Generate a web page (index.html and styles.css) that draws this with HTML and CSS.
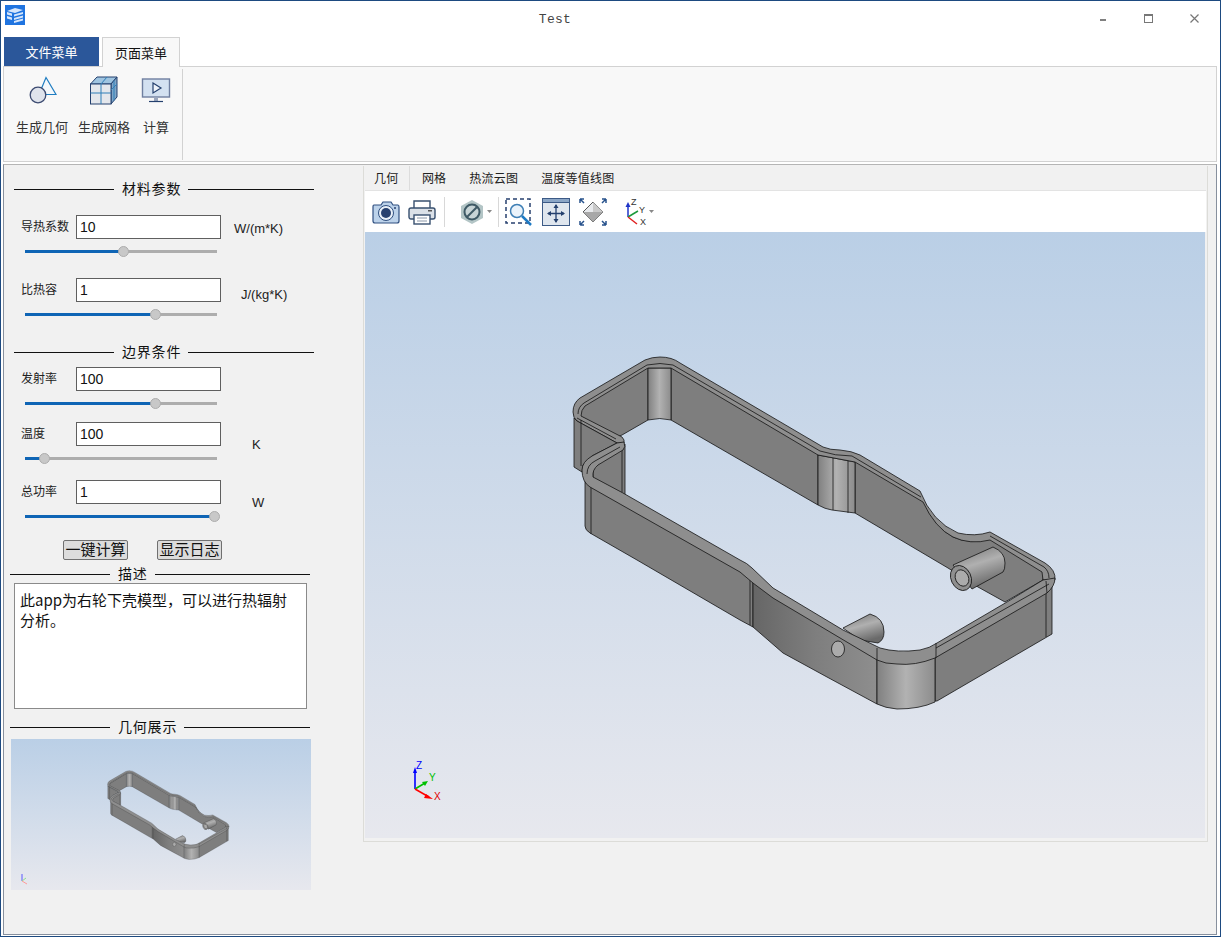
FILE: index.html
```html
<!DOCTYPE html>
<html lang="zh-CN">
<head>
    <meta charset="UTF-8">
    <meta name="viewport" content="width=device-width, initial-scale=1.0">
    <title>Test</title>
    <link rel="stylesheet" href="styles.css">
</head>
<body>
    <!-- shared geometry, used by the big viewer and the thumbnail -->
    <svg class="defs" width="0" height="0">
        <defs>
            <linearGradient id="bgGrad" x1="0" y1="0" x2="0" y2="1">
                <stop offset="0" stop-color="#bacfe6"/>
                <stop offset="1" stop-color="#e7e8ee"/>
            </linearGradient>
            <linearGradient id="colGrad" x1="0" y1="0" x2="1" y2="0">
                <stop offset="0" stop-color="#808080"/>
                <stop offset="0.5" stop-color="#b2b2b2"/>
                <stop offset="1" stop-color="#8c8c8c"/>
            </linearGradient>
            <linearGradient id="wallGrad" x1="0" y1="0" x2="1" y2="0">
                <stop offset="0" stop-color="#666666"/>
                <stop offset="0.5" stop-color="#7e7e7e"/>
                <stop offset="1" stop-color="#8e8e8e"/>
            </linearGradient>
            <linearGradient id="bossGrad" x1="0" y1="0" x2="0.4" y2="1">
                <stop offset="0" stop-color="#6f6f6f"/>
                <stop offset="0.5" stop-color="#b0b0b0"/>
                <stop offset="1" stop-color="#6a6a6a"/>
            </linearGradient>
            <g id="model" class="model">
                <!-- back inner walls -->
                <path class="wall" d="M580,408 L648,366 L648,420 L622,435 L617,437 L580,416 Z"/>
                <path class="wall" d="M671,366 L818,453 L818,505 L671,420 Z"/>
                <path class="col" d="M648,368 L671,368 L671,420 Q660,417 648,420 Z"/>
                <path class="wall" d="M855,460 L923,500 Q935,528 953,537 Q970,545 990,538 L1044,570 L1043,580 L1005,602 L978,587 L948,568 L855,513 Z"/>
                <path class="col" d="M818,455 L855,462 L855,513 L832,510 Q825,509 818,505 Z"/>
                <path class="line" d="M833,458 L833,510 M848,460 L848,513"/>
                <!-- back rim -->
                <path class="rim" d="M573,412 Q573,403 580,398 L645,360 Q652,357 660,357 Q672,357 680,363 L823,447 Q830,450 840,450 Q852,451 860,455 L920,491 Q932,522 958,533 Q975,537 990,532 L1045,563 Q1056,570 1055,580 L1043,580 L1042,572 L990,540 Q970,545 953,537 Q935,528 923,502 L855,462 L818,455 L671,368 L648,368 L585,406 Q581,410 581,416 L622,437 Q625,440 624,443 L617,443 L577,421 Q573,418 573,412 Z"/>
                <path class="line" d="M578,414 Q578,407 584,403 L647,365 Q660,362 673,365 L820,451 Q835,456 852,456 L921,497 M990,536 L1044,567 Q1049,571 1049,578 M577,418 L616,439"/>
                <!-- left outer walls -->
                <path class="wall" d="M574,418 L574,467 L582,472 L583,465 L592,456 L617,443 L577,421 Z"/>
                <path class="line" d="M581,420 L581,466"/>
                <path class="wall" d="M593,468 L622,446 L625,444 L625,495 L593,478 Z"/>
                <path class="line" d="M622,447 L622,492"/>
                <!-- bosses -->
                <path class="boss" d="M843,628 L870,614 Q884,618 884,632 Q884,640 878,643 L860,640 Z"/>
                <path class="boss" d="M953,565 L993,547 Q1005,552 1005,563 Q1005,570 1003,572 L972,589 Z"/>
                <ellipse class="boss-end" cx="961" cy="578" rx="10" ry="13" transform="rotate(-25 961 578)"/>
                <ellipse class="boss-hole" cx="962" cy="578" rx="6.5" ry="8.5" transform="rotate(-25 962 578)"/>
                <!-- front wall -->
                <path class="wall" d="M585,478 L740,566 L753,578 L753,627 L740,620 L637,560 L590,533 Q585,530 585,526 Z"/>
                <path class="wall-shade" d="M753,578 L877,655 L877,704 L827,677 L783,653 L753,627 Z"/>
                <path class="wall" d="M935,652 L1052,584 L1052,634 L937,701 L935,701 Z"/>
                <path class="col" d="M877,655 L935,652 L935,702 Q920,709 897,709 Q885,708 877,704 Z"/>
                <path class="line" d="M591,484 L591,534 M750,575 L750,625 M1046,590 L1046,637"/>
                <ellipse class="boss-hole" cx="838" cy="649" rx="6.5" ry="8"/>
                <!-- front rim -->
                <path class="rim" d="M582,470 Q582,462 592,456 L617,443 L624,442 Q626,447 623,450 L598,465 Q592,470 593,477 L623,493 L740,560 Q747,563 752,568 L773,588 L843,630 L880,648 Q897,653 920,650 Q930,648 937,643 L1007,602 L1043,580 L1055,578 Q1055,586 1047,593 L935,658 Q915,666 897,664 Q885,664 877,660 L773,598 L753,583 L740,572 L590,487 Q582,482 582,470 Z"/>
                <path class="line" d="M587,474 Q587,465 595,461 L620,447 M936,648 L1049,584 M877,648 L877,660 M936,643 L936,658 M1046,581 L1047,593"/>
            </g>
        </defs>
    </svg>

    <div class="window">
        <div class="titlebar">
            <svg class="app-icon" width="20" height="20" viewBox="0 0 20 20">
                <rect width="20" height="20" fill="#1f74e0"/>
                <path d="M2,6 L10,3 L18,5 L10,8 Z M2,7 L7,8.5 L7,11 L2,9.5 Z M9,9.5 L18,7 L18,9 L9,11.5 Z M2,11 L7,12.5 L7,15 L2,13.5 Z M9,13 L18,10.5 L18,12.5 L9,15 Z M9,16 L18,13.5 L18,15.5 L9,18 Z" fill="#d6e6fb"/>
            </svg>
            <div class="title-text">Test</div>
            <div class="win-controls">
                <svg width="9" height="9" viewBox="0 0 9 9"><rect x="2" y="5" width="6" height="2" fill="#808080"/></svg>
                <svg width="9" height="9" viewBox="0 0 9 9"><rect x="0.5" y="0.5" width="8" height="8" fill="none" stroke="#777"/><rect x="0" y="0" width="9" height="2" fill="#777"/></svg>
                <svg width="9" height="9" viewBox="0 0 9 9"><path d="M0.5,0.5 L8.5,8.5 M8.5,0.5 L0.5,8.5" stroke="#777" stroke-width="1.2"/></svg>
            </div>
        </div>

        <div class="tabbar">
            <div class="tab-file">文件菜单</div>
            <div class="tab-page">页面菜单</div>
        </div>

        <div class="ribbon">
            <div class="ribbon-group">
                <div class="ribbon-item">
                    <svg width="30" height="30" viewBox="0 0 30 30">
                        <path d="M19,1.5 L29,18.5 L12,18.5 Z" fill="#f4f8fb" stroke="#1f7dc1" stroke-width="1.2"/>
                        <circle cx="11" cy="19" r="7.8" fill="#dfe3ec" stroke="#3c4a70" stroke-width="1.3"/>
                    </svg>
                    <span>生成几何</span>
                </div>
                <div class="ribbon-item">
                    <svg width="30" height="30" viewBox="0 0 30 30">
                        <path d="M1.5,8 L8,1 L28,1 L22,8 Z" fill="#9fc4e0" stroke="#24406e"/>
                        <path d="M22,8 L28,1 L28,21 L22,28 Z" fill="#7fa6c8" stroke="#24406e"/>
                        <rect x="1.5" y="8" width="20.5" height="20" fill="#e4e7ec" stroke="#24406e"/>
                        <path d="M12,8 L12,28 M1.5,17 L22,17 M12,8 L18,1 M25,4.5 L25,24.5 M22,14 L28,8" stroke="#2f7fb8" fill="none"/>
                    </svg>
                    <span>生成网格</span>
                </div>
                <div class="ribbon-item">
                    <svg width="30" height="30" viewBox="0 0 30 30">
                        <rect x="1.5" y="3" width="27" height="18" fill="#d3e1f1" stroke="#6f7fa0" stroke-width="1.4"/>
                        <path d="M12,7 L20,12 L12,17 Z" fill="#eef3fa" stroke="#24406e" stroke-width="1.2"/>
                        <path d="M13,21 L17,21 L17,25 L13,25 Z" fill="#9aa6bd"/>
                        <path d="M8,25.5 L22,25.5" stroke="#24406e" stroke-width="1.2"/>
                    </svg>
                    <span>计算</span>
                </div>
            </div>
        </div>

        <div class="main">
            <div class="side">
                <div class="section-title first"><i></i><span>材料参数</span><i></i></div>

                <div class="field first">
                    <div class="field-row">
                        <label>导热系数</label>
                        <input type="text" value="10">
                        <span class="unit unit-a">W/(m*K)</span>
                    </div>
                    <div class="slider"><div class="fill" style="width:98px"></div><div class="thumb" style="left:98px"></div></div>
                </div>
                <div class="field">
                    <div class="field-row">
                        <label>比热容</label>
                        <input type="text" value="1">
                        <span class="unit unit-b">J/(kg*K)</span>
                    </div>
                    <div class="slider"><div class="fill" style="width:130px"></div><div class="thumb" style="left:130px"></div></div>
                </div>

                <div class="section-title second"><i></i><span>边界条件</span><i></i></div>

                <div class="field tight">
                    <div class="field-row">
                        <label>发射率</label>
                        <input type="text" value="100">
                    </div>
                    <div class="slider"><div class="fill" style="width:130px"></div><div class="thumb" style="left:130px"></div></div>
                </div>
                <div class="field mid">
                    <div class="field-row">
                        <label>温度</label>
                        <input type="text" value="100">
                        <span class="unit unit-c">K</span>
                    </div>
                    <div class="slider"><div class="fill" style="width:19px"></div><div class="thumb" style="left:19px"></div></div>
                </div>
                <div class="field last">
                    <div class="field-row">
                        <label>总功率</label>
                        <input type="text" value="1">
                        <span class="unit unit-c">W</span>
                    </div>
                    <div class="slider"><div class="fill" style="width:189px"></div><div class="thumb" style="left:189px"></div></div>
                </div>

                <div class="actions">
                    <button>一键计算</button>
                    <button>显示日志</button>
                </div>

                <div class="section-title wide desc-title"><i></i><span>描述</span><i></i></div>
                <div class="desc-box">此app为右轮下壳模型，可以进行热辐射分析。</div>

                <div class="section-title wide thumb-title"><i></i><span>几何展示</span><i></i></div>
                <svg class="thumb-view" width="300" height="151" viewBox="0 0 300 151">
                    <rect width="300" height="151" fill="url(#bgGrad)"/>
                    <svg width="300" height="151" viewBox="190 231 1190 599"><use href="#model"/></svg>
                    <path d="M11,142 L11,135" stroke="#5a5aff" fill="none"/>
                    <path d="M11,142 L15,139" stroke="#8ce08c" fill="none"/>
                    <path d="M11,142 L16,145" stroke="#ff9a9a" fill="none"/>
                </svg>
            </div>

            <div class="viewer-panel">
                <div class="viewer-tabs">
                    <div class="vtab active">几何</div>
                    <div class="vtab">网格</div>
                    <div class="vtab">热流云图</div>
                    <div class="vtab">温度等值线图</div>
                </div>
                <div class="toolbar">
                    <svg class="tool t-camera" width="28" height="26" viewBox="0 0 28 26">
                        <path d="M2,6 L9,6 L11,3 L19,3 L21,6 L26,6 Q27,6 27,8 L27,22 Q27,24 25,24 L3,24 Q1,24 1,22 L1,8 Q1,6 2,6 Z" fill="#bcd2ea" stroke="#2f4f80" stroke-width="1.2"/>
                        <circle cx="14" cy="14" r="7.5" fill="#eaf1f9" stroke="#2f4f80"/>
                        <circle cx="14" cy="14" r="5" fill="#27406f"/>
                        <circle cx="23" cy="9" r="1" fill="#27406f"/>
                    </svg>
                    <svg class="tool t-print" width="28" height="26" viewBox="0 0 28 26">
                        <path d="M6,9 L6,2 L22,2 L22,9" fill="#fff" stroke="#38506f" stroke-width="1.4"/>
                        <rect x="1" y="9" width="26" height="11" rx="2" fill="#dbe1e8" stroke="#38506f" stroke-width="1.4"/>
                        <rect x="6" y="16" width="16" height="9" fill="#fff" stroke="#38506f" stroke-width="1.4"/>
                        <path d="M9,19 L19,19 M9,22 L19,22" stroke="#8a97a8"/>
                        <rect x="20" y="11" width="4" height="1.5" fill="#555"/>
                    </svg>
                    <div class="tool-sep sep-a"></div>
                    <svg class="tool t-hide" width="26" height="26" viewBox="0 0 26 26">
                        <path d="M13,1 L24,7 L24,19 L13,25 L2,19 L2,7 Z" fill="#b3c5c6"/>
                        <circle cx="13" cy="13" r="7.5" fill="#c7d4d6" stroke="#3f5a66" stroke-width="2"/>
                        <path d="M8,18 L18,8" stroke="#3f5a66" stroke-width="2"/>
                    </svg>
                    <svg class="tool t-arrow" width="5" height="3" viewBox="0 0 5 3"><path d="M0,0 L5,0 L2.5,3 Z" fill="#888"/></svg>
                    <div class="tool-sep sep-b"></div>
                    <svg class="tool t-zoom" width="28" height="28" viewBox="0 0 28 28">
                        <rect x="1" y="1" width="24" height="24" fill="none" stroke="#27406f" stroke-width="1.5" stroke-dasharray="4 3"/>
                        <circle cx="12" cy="13" r="6.5" fill="#eaf3fb" stroke="#3e7fb5" stroke-width="1.5"/>
                        <path d="M17,18 L26,27" stroke="#1d7ac4" stroke-width="2.5"/>
                    </svg>
                    <svg class="tool t-fit" width="28" height="28" viewBox="0 0 28 28">
                        <rect x="0.5" y="0.5" width="27" height="27" fill="#dfe6ee" stroke="#3c5a86"/>
                        <rect x="0.5" y="0.5" width="27" height="4" fill="#8ba6c6" stroke="#3c5a86"/>
                        <path d="M14,7 L14,24 M6,15.5 L22,15.5" stroke="#24406e" stroke-width="1.3"/>
                        <path d="M14,6 L11.5,10 L16.5,10 Z M14,25 L11.5,21 L16.5,21 Z M5,15.5 L9,13 L9,18 Z M23,15.5 L19,13 L19,18 Z" fill="#24406e"/>
                    </svg>
                    <svg class="tool t-diamond" width="28" height="28" viewBox="0 0 28 28">
                        <path d="M14,4 L24,14 L14,24 L4,14 Z" fill="#e8eaed" stroke="#555"/>
                        <path d="M14,14 L24,14 L14,24 L4,14 Z" fill="#a8a8a8"/>
                        <path d="M14,14 L24,14 L14,4 Z" fill="#c9c9c9"/>
                        <path d="M1,1 L5,5 M1,1 L1,5 M1,1 L5,1 M27,1 L23,5 M27,1 L27,5 M27,1 L23,1 M1,27 L5,23 M1,27 L1,23 M1,27 L5,27 M27,27 L23,23 M27,27 L27,23 M27,27 L23,27" stroke="#27528c" stroke-width="1.5" fill="none"/>
                    </svg>
                    <svg class="tool t-axes" width="26" height="28" viewBox="0 0 26 28">
                        <path d="M5,19 L5,6" stroke="#1f35c8" stroke-width="1.5"/>
                        <path d="M5,4 L2.5,9 L7.5,9 Z" fill="#1f35c8"/>
                        <path d="M5,19 L15,13" stroke="#1a9a3a" stroke-width="1.5"/>
                        <path d="M5,19 L14,26" stroke="#e02020" stroke-width="1.5"/>
                        <text x="8" y="7" class="axis-label">Z</text>
                        <text x="16" y="15" class="axis-label">Y</text>
                        <text x="17" y="27" class="axis-label">X</text>
                    </svg>
                    <svg class="tool t-arrow2" width="5" height="3" viewBox="0 0 5 3"><path d="M0,0 L5,0 L2.5,3 Z" fill="#888"/></svg>
                </div>
                <svg class="viewport" width="840" height="606" viewBox="365 232 840 606">
                    <rect x="365" y="232" width="840" height="606" fill="url(#bgGrad)"/>
                    <use href="#model"/>
                    <path d="M415,789 L415,771" stroke="#0000ff" stroke-width="1.6"/>
                    <path d="M415,767 L413,773 L417,773 Z" fill="#0000ff"/>
                    <path d="M415,789 L425,783" stroke="#00c000" stroke-width="1.6"/>
                    <path d="M428,781 L422,782 L425,786 Z" fill="#00c000"/>
                    <path d="M415,789 L429,797" stroke="#ff0000" stroke-width="1.6"/>
                    <path d="M433,799 L426,794 L424,798 Z" fill="#ff0000"/>
                    <text x="416" y="769" class="vp-label vp-z">Z</text>
                    <text x="429" y="781" class="vp-label vp-y">Y</text>
                    <text x="434" y="800" class="vp-label vp-x">X</text>
                </svg>
            </div>
        </div>
    </div>
</body>
</html>
```

FILE: styles.css
```css
html, body {
    margin: 0;
    padding: 0;
    height: 100%;
    overflow: hidden;
}
body {
    font-family: "Noto Sans CJK SC", "Liberation Sans", sans-serif;
    color: #111;
    background-color: #fff;
}
.defs {
    display: block;
    height: 0;
}
.window {
    box-sizing: border-box;
    width: 1221px;
    height: 937px;
    border: 1px solid #1d4a80;
    padding: 0 3px 1px 2px;
    display: flex;
    flex-direction: column;
    background-color: #fff;
}

/* title bar */
.titlebar {
    height: 36px;
    display: flex;
    flex-shrink: 0;
    align-items: flex-start;
}
.app-icon {
    margin: 4px 0 0 2px;
}
.title-text {
    flex: 1;
    text-align: center;
    font-family: "Liberation Mono", monospace;
    font-size: 13px;
    letter-spacing: 0.3px;
    line-height: 37px;
    color: #444;
}
.win-controls {
    width: 132px;
    height: 34px;
    display: flex;
    align-items: center;
    gap: 37px;
    box-sizing: border-box;
    padding-left: 13px;
}

/* tabs + ribbon */
.tabbar {
    height: 29px;
    display: flex;
    flex-shrink: 0;
    padding-left: 1px;
    gap: 3px;
    font-size: 13px;
}
.tab-file {
    width: 95px;
    background-color: #2b579a;
    color: #fff;
    text-align: center;
    line-height: 29px;
}
.tab-page {
    box-sizing: border-box;
    width: 78px;
    height: 30px;
    border: 1px solid #d2d2d2;
    border-bottom: none;
    background-color: #f8f8f8;
    text-align: center;
    line-height: 29px;
    position: relative;
    z-index: 1;
}
.ribbon {
    box-sizing: border-box;
    height: 96px;
    flex-shrink: 0;
    border: 1px solid #d2d2d2;
    background-color: #f8f8f8;
    padding-top: 2px;
}
.ribbon-group {
    box-sizing: border-box;
    width: 179px;
    height: 91px;
    border-right: 1px solid #d2d2d2;
    display: flex;
    padding: 7px 0 0 12px;
    gap: 10px;
}
.ribbon-item {
    display: flex;
    flex-direction: column;
    align-items: center;
    font-size: 13px;
    color: #333;
}
.ribbon-item:last-child {
    margin-left: 1px;
}
.ribbon-item span {
    margin-top: 12px;
    line-height: 18px;
}

/* main area */
.main {
    flex: 1;
    margin-top: 2px;
    display: flex;
    background-color: #f1f1f1;
    border: 1px solid #87909e;
    border-top-color: #b5b5b5;
    min-height: 0;
}
.side {
    width: 359px;
    flex-shrink: 0;
}
.section-title {
    display: flex;
    align-items: center;
    width: 300px;
    margin: 0 0 0 10px;
    height: 20px;
    font-size: 14px;
    letter-spacing: 0.8px;
}
.section-title i {
    display: block;
    height: 1px;
    background-color: #111;
    width: 100px;
}
.section-title i:last-child {
    flex: 1;
}
.section-title span {
    padding: 0 7px 2px 8px;
}
.section-title.wide {
    margin-left: 6px;
}
.section-title.first {
    margin-top: 14px;
}
.section-title.second {
    margin-top: 26px;
}
.desc-title {
    margin-top: 4px;
}
.thumb-title {
    margin-top: 8px;
}

.field {
    margin-top: 25px;
}
.field.first {
    margin-top: 16px;
}
.field.tight {
    margin-top: 5px;
}
.field.mid {
    margin-top: 17px;
}
.field.last {
    margin-top: 20px;
}
.field-row {
    display: flex;
    align-items: flex-start;
    height: 24px;
    padding-left: 17px;
}
.field-row label {
    width: 55px;
    font-size: 12px;
    line-height: 22px;
    color: #222;
    flex-shrink: 0;
}
.field-row input {
    box-sizing: border-box;
    width: 145px;
    height: 24px;
    border: 1px solid #5f5f5f;
    background-color: #fff;
    padding: 0 3px;
    font-family: "Liberation Sans", sans-serif;
    font-size: 14px;
    color: #111;
    border-radius: 0;
    outline: none;
}
.unit {
    font-family: "Liberation Sans", sans-serif;
    font-size: 13px;
    line-height: 24px;
    color: #222;
}
.unit-a {
    margin: 2px 0 0 13px;
}
.unit-b {
    margin: 5px 0 0 20px;
}
.unit-c {
    margin: 11px 0 0 31px;
}
.slider {
    position: relative;
    width: 192px;
    height: 3px;
    margin: 11px 0 0 21px;
    background-color: #adadad;
}
.slider .fill {
    height: 3px;
    background-color: #0f65b5;
}
.slider .thumb {
    position: absolute;
    top: -4px;
    box-sizing: border-box;
    width: 11px;
    height: 11px;
    margin-left: -5px;
    border-radius: 50%;
    background-color: #c8c8c8;
    border: 1px solid #adadad;
}
.actions {
    display: flex;
    gap: 29px;
    margin: 22px 0 0 59px;
}
.actions button {
    box-sizing: border-box;
    width: 65px;
    height: 20px;
    padding: 0 0 2px;
    border: 1px solid #707070;
    border-radius: 2px;
    background-color: #dcdcdc;
    font-family: "Noto Sans CJK SC", sans-serif;
    font-size: 15px;
    line-height: 16px;
    color: #111;
}
.desc-box {
    box-sizing: border-box;
    width: 293px;
    height: 126px;
    margin: -1px 0 0 10px;
    padding: 6px 12px 4px 5px;
    border: 1px solid #8a8a8a;
    background-color: #fff;
    font-size: 15px;
    line-height: 20px;
}
.thumb-view {
    display: block;
    margin: 2px 0 0 7px;
}

/* viewer */
.viewer-panel {
    box-sizing: border-box;
    width: 845px;
    height: 676px;
    margin-top: 1px;
    border: 1px solid #dcdcd8;
    border-top: none;
    padding: 0 1px 2px;
    display: flex;
    flex-direction: column;
}
.viewer-tabs {
    height: 24px;
    display: flex;
    font-size: 12px;
    letter-spacing: 0.2px;
    flex-shrink: 0;
    line-height: 24px;
    color: #222;
}
.vtab {
    padding: 0 11.5px;
}
.vtab.active {
    padding: 0 11px 0 9px;
    border-right: 1px solid #dcdcdc;
}
.toolbar {
    height: 42px;
    flex-shrink: 0;
    background-color: #fff;
    display: flex;
    align-items: center;
    border-top: 1px solid #e3e3e3;
    box-sizing: border-box;
}
.tool {
    display: block;
    flex-shrink: 0;
}
.t-camera { margin-left: 7px; }
.t-print { margin-left: 8px; }
.tool-sep {
    width: 1px;
    height: 30px;
    background-color: #d8d8d8;
    flex-shrink: 0;
}
.sep-a { margin-left: 8px; }
.t-hide { margin-left: 14px; }
.t-arrow { margin-left: 2px; }
.sep-b { margin-left: 6px; }
.t-zoom { margin-left: 6px; }
.t-fit { margin-left: 9px; }
.t-diamond { margin-left: 9px; }
.t-axes { margin-left: 16px; }
.t-arrow2 { margin-left: 0; }
.axis-label {
    font-family: "Liberation Sans", sans-serif;
    font-size: 9px;
    fill: #333;
}
.viewport {
    display: block;
    flex-shrink: 0;
}
.vp-label {
    font-family: "Liberation Sans", sans-serif;
    font-size: 10px;
}
.vp-z { fill: #0000ff; }
.vp-y { fill: #00c000; }
.vp-x { fill: #e00000; }

/* part faces */
.model path, .model ellipse {
    stroke: #141414;
    stroke-width: 0.8;
    stroke-linejoin: round;
}
.model .wall { fill: #7e7e7e; }
.model .wall-shade { fill: url(#wallGrad); }
.model .col { fill: url(#colGrad); }
.model .rim { fill: #8e8e8e; }
.model .line { fill: none; }
.model .boss { fill: url(#bossGrad); }
.model .boss-end { fill: #8f8f8f; }
.model .boss-hole { fill: #ababab; }
```
